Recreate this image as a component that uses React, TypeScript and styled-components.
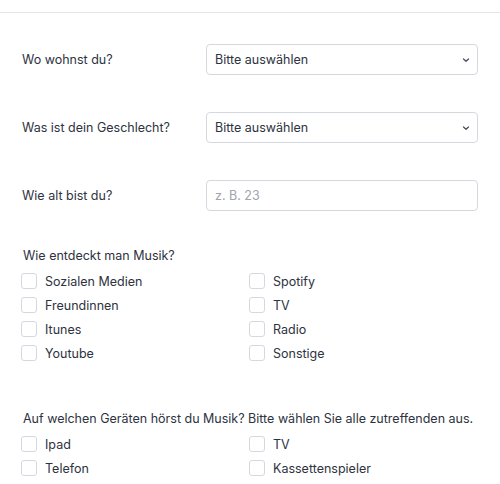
import React from 'react';
import styled, { createGlobalStyle } from 'styled-components';

const GlobalStyle = createGlobalStyle`
  body {
    margin: 0;
    background: #ffffff;
    font-family: Inter, "Noto Sans", sans-serif;
    color: #2d3340;
  }
`;

const discoveryOptions = [
  'Sozialen Medien',
  'Spotify',
  'Freundinnen',
  'TV',
  'Itunes',
  'Radio',
  'Youtube',
  'Sonstige',
];

const deviceOptions = ['Ipad', 'TV', 'Telefon', 'Kassettenspieler', 'Computer', 'Plattenspieler'];

const Chevron: React.FC = () => (
  <ChevronIcon width="10" height="10" viewBox="0 0 10 10">
    <path d="M2.5 4 L5 6.3 L7.5 4" fill="none" stroke="#4a5060" strokeWidth="1.3" strokeLinecap="round" strokeLinejoin="round" />
  </ChevronIcon>
);

const App: React.FC = () => (
  <>
    <GlobalStyle />
    <Page>
      <Divider />
      <Form>
        <FieldRow>
          <Label>Wo wohnst du?</Label>
          <SelectBox>
            <span>Bitte auswählen</span>
            <Chevron />
          </SelectBox>
        </FieldRow>
        <FieldRow>
          <Label>Was ist dein Geschlecht?</Label>
          <SelectBox>
            <span>Bitte auswählen</span>
            <Chevron />
          </SelectBox>
        </FieldRow>
        <FieldRow>
          <Label>Wie alt bist du?</Label>
          <TextInput placeholder="z. B. 23" />
        </FieldRow>

        <Group>
          <GroupTitle>Wie entdeckt man Musik?</GroupTitle>
          <OptionGrid>
            {discoveryOptions.map((o) => (
              <Option key={o}>
                <Box />
                {o}
              </Option>
            ))}
          </OptionGrid>
        </Group>

        <Group $spaced>
          <GroupTitle>Auf welchen Geräten hörst du Musik? Bitte wählen Sie alle zutreffenden aus.</GroupTitle>
          <OptionGrid>
            {deviceOptions.map((o, i) => (
              <Option key={o + i}>
                <Box />
                {o}
              </Option>
            ))}
          </OptionGrid>
        </Group>
      </Form>
    </Page>
  </>
);

export default App;

const Page = styled.div`
  padding-top: 12px;
  height: 484px;
  box-sizing: border-box;
  overflow: hidden;
`;

const Divider = styled.div`
  border-top: 1px solid #e3e5ea;
`;

const Form = styled.div`
  padding: 31px 22px 0;
  display: flex;
  flex-direction: column;
  gap: 37px;
`;

const FieldRow = styled.div`
  display: grid;
  grid-template-columns: 184px 1fr;
  align-items: center;
`;

const Label = styled.label`
  font-size: 12.5px;
  line-height: 16px;
  color: #2d3340;
`;

const SelectBox = styled.div`
  height: 31px;
  box-sizing: border-box;
  border: 1px solid #d5d8de;
  border-radius: 4px;
  padding: 0 6px 0 8px;
  display: flex;
  align-items: center;
  justify-content: space-between;
  font-size: 12.5px;
  color: #2d3340;
`;

const ChevronIcon = styled.svg`
  display: block;
`;

const TextInput = styled.input`
  height: 31px;
  box-sizing: border-box;
  border: 1px solid #d5d8de;
  border-radius: 4px;
  padding: 0 8px;
  font-family: Inter, "Noto Sans", sans-serif;
  font-size: 12.5px;
  color: #2d3340;
  outline: none;

  &::placeholder {
    color: #a0a4ad;
  }
`;

const Group = styled.div<{ $spaced?: boolean }>`
  margin-top: ${({ $spaced }) => ($spaced ? '13px' : '0')};
`;

const GroupTitle = styled.div`
  font-size: 12.5px;
  line-height: 16px;
  padding-left: 1px;
  margin-bottom: 9px;
  white-space: nowrap;
`;

const OptionGrid = styled.div`
  display: grid;
  grid-template-columns: 1fr 1fr;
  row-gap: 8px;
`;

const Option = styled.label`
  display: flex;
  align-items: center;
  gap: 8px;
  height: 16px;
  font-size: 12.5px;
  color: #2d3340;
`;

const Box = styled.span`
  width: 16px;
  height: 16px;
  box-sizing: border-box;
  border: 1px solid #d5d8de;
  border-radius: 3px;
  margin-left: -1px;
  flex-shrink: 0;
`;
